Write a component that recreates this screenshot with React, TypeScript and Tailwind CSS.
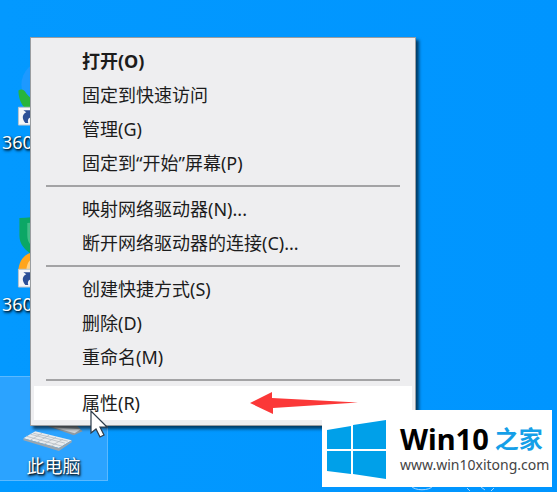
import clsx from "clsx";

interface IMenuItem {
  key: string;
  label: string;
  bold?: boolean;
  active?: boolean;
}

const menuGroups: IMenuItem[][] = [
  [
    { key: "open", label: "打开(O)", bold: true },
    { key: "pin_quick", label: "固定到快速访问" },
    { key: "manage", label: "管理(G)" },
    { key: "pin_start", label: "固定到“开始”屏幕(P)" },
  ],
  [
    { key: "map_drive", label: "映射网络驱动器(N)..." },
    { key: "unmap_drive", label: "断开网络驱动器的连接(C)..." },
  ],
  [
    { key: "shortcut", label: "创建快捷方式(S)" },
    { key: "delete", label: "删除(D)" },
    { key: "rename", label: "重命名(M)" },
  ],
  [{ key: "properties", label: "属性(R)", active: true }],
];

const ShortcutBadge = () => (
  <g>
    <path d="M18 55h20v18H18z" fill="#f4f6f8" stroke="#b9c4cc" />
    <path
      d="M25 71c-4-5-3-9 1-11l-3-2h13v10l-4-3c-4 0-5 3-4 6z"
      fill="#2b4f96"
    />
  </g>
);

const BrowserIcon = () => (
  <svg viewBox="0 0 101 76" className="block w-[101px]" aria-hidden="true">
    <circle cx="45" cy="32" r="24" fill="#1d99ff" />
    <path d="M18 38c3-2 6-1 8 3 8 10 22 13 34 6-8 16-28 18-36 8-4-4-6-11-6-17z" fill="#27b53c" />
    <ShortcutBadge />
  </svg>
);

const GuardIcon = () => (
  <svg viewBox="0 0 101 76" className="block w-[101px]" aria-hidden="true">
    <path d="M19 3c8 0 16-1 26-3v46c-16-5-26-14-26-25z" fill="#0ba765" />
    <path d="M27 8c4 0 9-1 15-2v32c-9-4-15-9-15-17z" fill="#43bd88" />
    <path d="M18 57c0-12 8-20 20-20s20 8 20 20z" fill="#ffa51d" />
    <path d="M26 57c0-7 3-13 8-13v13z" fill="#ffd38a" />
    <ShortcutBadge />
  </svg>
);

const ComputerIcon = () => (
  <svg viewBox="0 0 101 76" className="block w-[101px]" aria-hidden="true">
    <path d="M45 50l26 9 9-4-8-8z" fill="#8e9aa3" />
    <path d="M50 51l22 6 6-4z" fill="#cdd3d8" />
    <path d="M20 62l12-7 37 9-13 8z" fill="#e9ecee" />
    <path d="M20 62l36 10 13-8v2L56 75 20 64z" fill="#9aa6af" />
    <path
      d="M23 60l36 10M27 58l35 9M30 57l35 8M27 64l12-7M34 66l12-7M41 68l12-7M48 70l12-7"
      stroke="#b4bcc2"
      strokeWidth="0.8"
      fill="none"
    />
  </svg>
);

const DesktopIcon = ({
  icon,
  label,
  selected,
}: {
  icon: React.ReactNode;
  label: string;
  selected?: boolean;
}) => (
  <button
    type="button"
    className={clsx(
      "flex h-[105px] w-[108px] flex-col border border-l-0 text-[18px] leading-7 text-white",
      "[text-shadow:1px_1px_2px_#000,1px_2px_3px_#00000099]",
      selected
        ? "items-center border-[#5bb9ff] bg-[#2ba3ff]"
        : "items-start border-transparent"
    )}>
    {icon}
    <span className={selected ? "" : "pl-[2px]"}>{label}</span>
  </button>
);

const RedArrow = () => (
  <svg
    viewBox="0 0 108 24"
    className="absolute top-1/2 left-[216px] h-6 w-[108px] -translate-y-1/2"
    aria-hidden="true">
    <path d="M0 12L22 1v6l86 4.500L23 17v6z" fill="#fb3838" />
  </svg>
);

const Cursor = () => (
  <svg
    viewBox="0 0 20 30"
    className="absolute top-6 left-14 h-[30px] w-5"
    aria-hidden="true">
    <path
      d="M1 1v22l5-4 4 8 4-2-4-8h7z"
      fill="#fff"
      stroke="#2c3b4a"
      strokeWidth="1.200"
    />
  </svg>
);

const ContextMenu = () => (
  <div
    role="menu"
    className="absolute top-[37px] left-[30px] w-[386px] border border-[#9a9da0] bg-[#eeeef0] px-[3px] pt-1.5 pb-[5px] shadow-[3px_3px_3px_#0009]">
    {menuGroups.map((group, index) => (
      <div key={group[0].key}>
        {index > 0 && (
          <div className="px-3 py-[5px]">
            <hr className="border-t-2 border-[#a3a3a5]" />
          </div>
        )}
        {group.map((item) => (
          <div key={item.key} className="relative">
            <button
              type="button"
              role="menuitem"
              className={clsx(
                "block h-[34px] w-full pl-12 text-left text-[18px] leading-[34px] text-[#1c1c1c]",
                item.bold && "font-bold",
                item.active && "bg-white"
              )}>
              {item.label}
            </button>
            {item.active && (
              <>
                <RedArrow />
                <Cursor />
              </>
            )}
          </div>
        ))}
      </div>
    ))}
  </div>
);

const SiteBadge = () => (
  <a
    href="#"
    className="absolute right-[5px] bottom-[5px] flex h-[77px] w-[230px] items-center bg-white">
    <svg
      viewBox="0 0 60 60"
      className="ml-[5px] h-[60px] w-[60px] shrink-0"
      aria-hidden="true">
      <path
        d="M0 11l24-4v23H0zM26 6l33-5v29H26zM0 32h24v23L0 52zM26 32h33v28l-33-5z"
        fill="#00a0e9"
      />
    </svg>
    <span className="ml-[13px] flex flex-col whitespace-nowrap">
      <span className="flex items-center gap-1.5 text-[29px] leading-8 font-bold text-black">
        Win10
        <span className="text-[24px] text-[#159fe8]">之家</span>
      </span>
      <span className="text-[14px] leading-5 text-[#444]">
        www.win10xitong.com
      </span>
    </span>
  </a>
);

const App = () => {
  return (
    <main className="relative min-h-screen overflow-hidden bg-linear-to-r from-[#0399ff] to-[#0095ff] font-['Noto_Sans','Noto_Sans_CJK_SC',sans-serif]">
      <div className="flex flex-col gap-[57px] pt-[52px]">
        <DesktopIcon icon={<BrowserIcon />} label="360" />
        <DesktopIcon icon={<GuardIcon />} label="360" />
        <DesktopIcon icon={<ComputerIcon />} label="此电脑" selected />
      </div>
      <svg
        viewBox="0 0 110 14"
        className="absolute right-[42px] bottom-0 h-3.5 w-[110px]"
        aria-hidden="true">
        <path
          d="M6 8c4 5 18 5 22 0M62 10l3 3M76 9l4 3M89 10l-3 3"
          stroke="#a9d8ff"
          strokeWidth="1"
          fill="none"
        />
      </svg>
      <ContextMenu />
      <SiteBadge />
    </main>
  );
};

export default App;
